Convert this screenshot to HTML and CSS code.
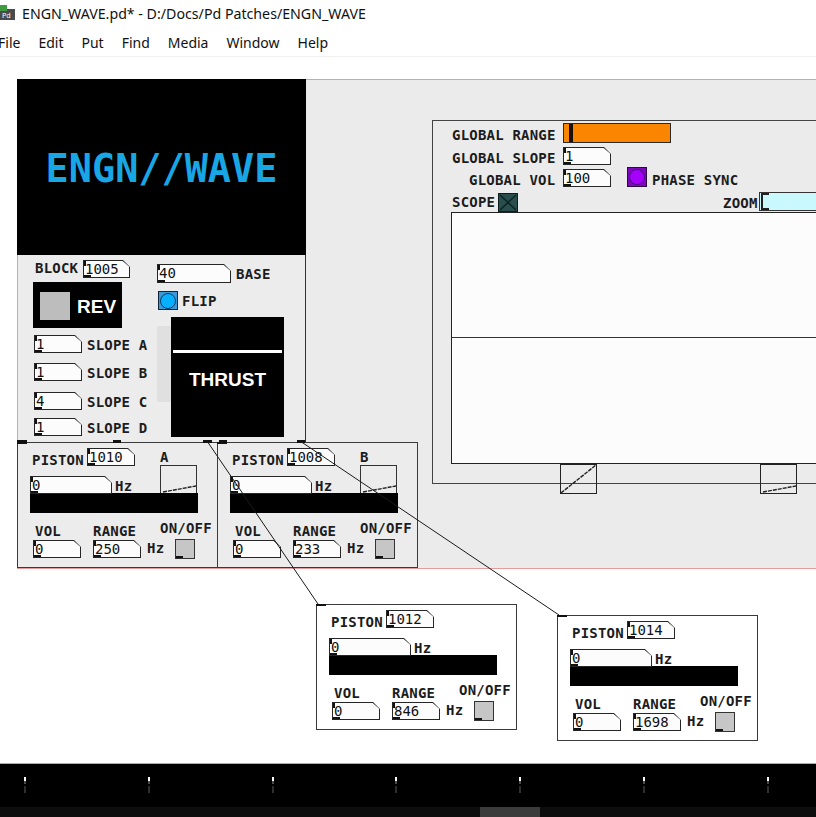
FILE: index.html
```html
<!DOCTYPE html>
<html lang="en">
<head>
<meta charset="utf-8">
<title>ENGN_WAVE.pd</title>
<link rel="stylesheet" href="styles.css">
</head>
<body>
<div class="window">
  <header class="titlebar">
    <svg class="appicon" viewBox="0 0 16 15" width="16" height="15"><rect x="0" y="4" width="15" height="11" fill="#4a4a4a"/><rect x="0" y="0" width="7" height="6" fill="#3f9b3f"/><text x="2" y="13" font-size="7" fill="#fff" font-family="DejaVu Sans">Pd</text></svg>
    <span class="title">ENGN_WAVE.pd* - D:/Docs/Pd Patches/ENGN_WAVE</span>
  </header>
  <nav class="menubar">
    <span>File</span><span>Edit</span><span>Put</span><span>Find</span><span>Media</span><span>Window</span><span>Help</span>
  </nav>
  <main class="canvas">
    <div class="gop"></div>
    <div class="header"><span class="logo">ENGN//WAVE</span></div>
    <div class="engine"></div>

    <span class="lbl l-block">BLOCK</span>
    <span class="nb n-block"><span>1005</span></span>
    <div class="rev"><span class="rev-sq"></span><span class="rev-txt">REV</span></div>
    <span class="nb n-base"><span>40</span></span>
    <span class="lbl l-base">BASE</span>
    <span class="tog tog-flip"><i></i></span>
    <span class="lbl l-flip">FLIP</span>
    <span class="strip"></span>
    <div class="thrust"><span class="thrust-line"></span><span class="thrust-txt">THRUST</span></div>
    <span class="nb n-sa"><span>1</span></span><span class="lbl l-sa">SLOPE A</span>
    <span class="nb n-sb"><span>1</span></span><span class="lbl l-sb">SLOPE B</span>
    <span class="nb n-sc"><span>4</span></span><span class="lbl l-sc">SLOPE C</span>
    <span class="nb n-sd"><span>1</span></span><span class="lbl l-sd">SLOPE D</span>

    <section class="piston piston-a">
      <span class="lbl p-name">PISTON</span>
      <span class="nb p-id"><span>1010</span></span>
      <span class="lbl p-letter">A</span>
      <span class="p-graph"><svg width="35" height="38" viewBox="0 0 35 38"><line x1="2" y1="26" x2="35" y2="20"/></svg></span>
      <span class="nb p-freq"><span>0</span></span>
      <span class="lbl p-hz1">Hz</span>
      <span class="p-bar"></span>
      <span class="lbl p-vol">VOL</span>
      <span class="lbl p-range">RANGE</span>
      <span class="lbl p-onoff">ON/OFF</span>
      <span class="nb p-volbox"><span>0</span></span>
      <span class="nb p-rangebox"><span>250</span></span>
      <span class="lbl p-hz2">Hz</span>
      <span class="tgl p-toggle"></span>
    </section>

    <section class="piston piston-b">
      <span class="lbl p-name">PISTON</span>
      <span class="nb p-id"><span>1008</span></span>
      <span class="lbl p-letter">B</span>
      <span class="p-graph"><svg width="35" height="38" viewBox="0 0 35 38"><line x1="2" y1="26" x2="35" y2="20"/></svg></span>
      <span class="nb p-freq"><span>0</span></span>
      <span class="lbl p-hz1">Hz</span>
      <span class="p-bar"></span>
      <span class="lbl p-vol">VOL</span>
      <span class="lbl p-range">RANGE</span>
      <span class="lbl p-onoff">ON/OFF</span>
      <span class="nb p-volbox"><span>0</span></span>
      <span class="nb p-rangebox"><span>233</span></span>
      <span class="lbl p-hz2">Hz</span>
      <span class="tgl p-toggle"></span>
    </section>

    <section class="piston piston-c white">
      <span class="lbl p-name">PISTON</span>
      <span class="nb p-id"><span>1012</span></span>
      <span class="nb p-freq"><span>0</span></span>
      <span class="lbl p-hz1">Hz</span>
      <span class="p-bar"></span>
      <span class="lbl p-vol">VOL</span>
      <span class="lbl p-range">RANGE</span>
      <span class="lbl p-onoff">ON/OFF</span>
      <span class="nb p-volbox"><span>0</span></span>
      <span class="nb p-rangebox"><span>846</span></span>
      <span class="lbl p-hz2">Hz</span>
      <span class="tgl p-toggle"></span>
    </section>

    <section class="piston piston-d white">
      <span class="lbl p-name">PISTON</span>
      <span class="nb p-id"><span>1014</span></span>
      <span class="nb p-freq"><span>0</span></span>
      <span class="lbl p-hz1">Hz</span>
      <span class="p-bar"></span>
      <span class="lbl p-vol">VOL</span>
      <span class="lbl p-range">RANGE</span>
      <span class="lbl p-onoff">ON/OFF</span>
      <span class="nb p-volbox"><span>0</span></span>
      <span class="nb p-rangebox"><span>1698</span></span>
      <span class="lbl p-hz2">Hz</span>
      <span class="tgl p-toggle"></span>
    </section>

    <div class="scopebox"></div>
    <span class="lbl l-grange">GLOBAL RANGE</span>
    <span class="slider-range"></span>
    <span class="lbl l-gslope">GLOBAL SLOPE</span>
    <span class="nb n-gslope"><span>1</span></span>
    <span class="lbl l-gvol">GLOBAL VOL</span>
    <span class="nb n-gvol"><span>100</span></span>
    <span class="tog tog-phase"><i></i></span>
    <span class="lbl l-phase">PHASE SYNC</span>
    <span class="lbl l-scope">SCOPE</span>
    <span class="tog-scope"><svg width="18" height="17" viewBox="0 0 18 17"><line x1="1" y1="1" x2="17" y2="16"/><line x1="17" y1="1" x2="1" y2="16"/></svg></span>
    <span class="lbl l-zoom">ZOOM</span>
    <span class="slider-zoom"></span>
    <div class="scope"><span class="scope-mid"></span></div>
    <span class="mini mini-1"><svg width="35" height="28" viewBox="0 0 35 28"><line x1="0" y1="28" x2="35" y2="0"/></svg></span>
    <span class="mini mini-2"><svg width="35" height="28" viewBox="0 0 35 28"><line x1="2" y1="27" x2="35" y2="21"/></svg></span>

    <span class="mark mk1"></span>
    <span class="mark mk2"></span>
    <span class="mark mk3"></span>
    <span class="mark mk4"></span>
    <span class="mark mk5"></span>

    <svg class="cords" width="816" height="706" viewBox="0 0 816 706">
      <line x1="207" y1="384" x2="318" y2="547"/>
      <line x1="300" y1="384" x2="559" y2="558"/>
    </svg>
  </main>
  <footer class="taskbar">
    <div class="tb-icons"><i></i><i></i><i></i><i></i><i></i><i></i><i></i></div>
    <div class="tb-strip"><span class="tb-active"></span></div>
  </footer>
</div>
</body>
</html>
```
FILE: styles.css
```css
* { box-sizing: border-box; margin: 0; padding: 0; }
html, body { width: 816px; height: 817px; overflow: hidden; background: #fff; }
body { font-family: "Noto Sans", "Open Sans", sans-serif; color: #000; }

.window { display: flex; flex-direction: column; height: 817px; }

.titlebar { height: 30px; flex: none; display: flex; align-items: flex-start; }
.appicon { flex: none; margin-top: 5px; }
.title { margin-left: 6px; font-size: 14.2px; line-height: 27px; color: #111; white-space: nowrap; }

.menubar { height: 27px; flex: none; display: flex; gap: 18px; margin-left: -2px; font-size: 14px; line-height: 26px; color: #111; border-bottom: 1px solid #f0f0f0; }

.canvas { position: relative; height: 706px; flex: none; overflow: hidden; background: #fff; }

/* labels and atoms */
.lbl { position: absolute; font: bold 14px/14px "DejaVu Sans Mono", monospace; color: #1c1c1c; white-space: nowrap; letter-spacing: .2px; z-index: 2; }
.nb { position: absolute; height: 18px; width: 48px; background: #262626; clip-path: polygon(0 0, calc(100% - 7px) 0, 100% 7px, 100% 100%, 0 100%); font: 14px/19px "DejaVu Sans Mono", monospace; color: #111; padding-left: 2px; white-space: nowrap; z-index: 2; }
.nb::before { content: ""; position: absolute; left: 1px; top: 1px; right: 1px; bottom: 1px; background: linear-gradient(#111, #111) 0 0 / 2px 5px no-repeat, linear-gradient(#111, #111) 0 100% / 7px 2px no-repeat, #fcfcfc; clip-path: polygon(0 0, calc(100% - 6.4px) 0, 100% 5.4px, 100% 100%, 0 100%); }
.nb > span { position: relative; }

.tgl { position: absolute; width: 20px; height: 20px; background: #c6c6c6; border: 1px solid #333; z-index: 2; }
.tgl::after { content: ""; position: absolute; left: 0; bottom: 0; width: 7px; height: 2px; background: #111; }

/* gop area */
.gop { position: absolute; left: 17px; top: 22px; width: 830px; height: 490px; background: #ebebeb; border: 1px solid #e79b9b; }
.header { position: absolute; left: 17px; top: 22px; width: 289px; height: 176px; background: #000; display: flex; align-items: center; justify-content: center; padding-top: 5px; }
.logo { font: bold 38.5px/1 "DejaVu Sans Mono", monospace; color: #19a6e4; }
.engine { position: absolute; left: 18px; top: 198px; width: 288px; height: 188px; background: #ececec; border-right: 1px solid #333; border-bottom: 1px solid #333; }

.l-block { left: 35px; top: 204px; }
.n-block { left: 83px; top: 203px; width: 47px; }
.rev { position: absolute; left: 33px; top: 225px; width: 89px; height: 46px; background: #000; }
.rev-sq { position: absolute; left: 7px; top: 10px; width: 30px; height: 28px; background: #bdbdbd; }
.rev-txt { position: absolute; left: 44px; top: 15px; font: bold 19px/19px "Liberation Sans", Arial, sans-serif; color: #fff; }
.n-base { left: 157px; top: 207px; width: 74px; height: 19px; }
.l-base { left: 236px; top: 210px; }
.tog { position: absolute; width: 20px; height: 19px; border: 1px solid #10253a; display: flex; align-items: center; justify-content: center; z-index: 2; }
.tog i { display: block; width: 16px; height: 16px; border-radius: 50%; border: 1px solid #0b3a66; }
.tog-flip { left: 158px; top: 234px; background: #3a9ad8; }
.tog-flip i { background: #07b0ff; }
.l-flip { left: 182px; top: 237px; }
.strip { position: absolute; left: 157px; top: 269px; width: 14px; height: 76px; background: #e0e0e0; }
.thrust { position: absolute; left: 171px; top: 260px; width: 113px; height: 120px; background: #000; }
.thrust-line { position: absolute; left: 2px; right: 2px; top: 33px; height: 3px; background: #fff; }
.thrust-txt { position: absolute; left: 0; right: 0; top: 53px; text-align: center; font: bold 19px/19px "Liberation Sans", Arial, sans-serif; color: #fff; }
.n-sa { left: 34px; top: 278px; }
.n-sb { left: 34px; top: 306px; }
.n-sc { left: 34px; top: 335px; }
.n-sd { left: 34px; top: 361px; }
.l-sa { left: 87px; top: 281px; }
.l-sb { left: 87px; top: 309px; }
.l-sc { left: 87px; top: 338px; }
.l-sd { left: 87px; top: 364px; }

/* piston subpatches */
.piston { position: absolute; width: 201px; height: 126px; border: 1px solid #3a3a3a; background: #ececec; }
.piston::before { content: ""; position: absolute; left: -1px; top: -1px; width: 10px; height: 2px; background: #111; }
.piston.white { background: #fff; }
.piston-a { left: 17px; top: 385px; }
.piston-b { left: 217px; top: 385px; }
.piston-c { left: 316px; top: 547px; }
.piston-d { left: 557px; top: 558px; }
.p-name { left: 14px; top: 10px; }
.p-id { left: 69px; top: 5px; }
.p-letter { left: 142px; top: 7px; }
.p-graph { position: absolute; left: 142px; top: 22px; width: 37px; height: 40px; border: 1px solid #333; }
.p-graph svg, .mini svg { display: block; }
.p-graph line, .mini line { stroke: #222; stroke-width: 1.4; stroke-dasharray: 4 1; }
.p-freq { left: 12px; top: 33px; width: 82px; }
.p-hz1 { left: 97px; top: 36px; }
.p-bar { position: absolute; left: 12px; top: 50px; width: 168px; height: 20px; background: #000; z-index: 1; }
.p-vol { left: 17px; top: 81px; }
.p-range { left: 75px; top: 81px; }
.p-onoff { left: 142px; top: 78px; }
.p-volbox { left: 15px; top: 97px; }
.p-rangebox { left: 75px; top: 97px; }
.p-hz2 { left: 129px; top: 98px; }
.p-toggle { left: 157px; top: 96px; }

/* scope section */
.scopebox { position: absolute; left: 432px; top: 63px; width: 400px; height: 364px; border: 1px solid #444; }
.l-grange { left: 452px; top: 71px; }
.slider-range { position: absolute; left: 563px; top: 66px; width: 108px; height: 20px; background: #f98500; border: 1px solid #2a2a2a; }
.slider-range::before { content: ""; position: absolute; left: 5px; top: 0; bottom: 0; width: 4px; background: #1a1008; }
.l-gslope { left: 452px; top: 94px; }
.n-gslope { left: 563px; top: 90px; }
.l-gvol { left: 469px; top: 116px; }
.n-gvol { left: 563px; top: 112px; }
.tog-phase { left: 627px; top: 110px; height: 20px; background: #7d08bd; border-color: #2d0a45; }
.tog-phase i { background: #a500fa; border-color: #4a0a80; }
.l-phase { left: 652px; top: 116px; }
.l-scope { left: 452px; top: 138px; }
.tog-scope { position: absolute; left: 498px; top: 136px; width: 20px; height: 19px; background: #2a4e4e; border: 1px solid #0e1e1e; }
.tog-scope svg { display: block; }
.tog-scope line { stroke: #0d2424; stroke-width: 1.6; }
.l-zoom { left: 723px; top: 139px; }
.slider-zoom { position: absolute; left: 759px; top: 135px; width: 80px; height: 19px; background: #c9f9fc; border: 1px solid #333; }
.slider-zoom::before { content: ""; position: absolute; left: 1px; top: 0; bottom: 0; width: 6px; border-left: 2px solid #222; background: linear-gradient(#222, #222) 0 0 / 6px 2px no-repeat, linear-gradient(#222, #222) 0 100% / 6px 2px no-repeat; }
.scope { position: absolute; left: 451px; top: 155px; width: 400px; height: 252px; background: #fcfcfc; border: 1px solid #222; }
.scope-mid { position: absolute; left: 0; right: 0; top: 124px; height: 1px; background: #333; }
.mini { position: absolute; top: 407px; width: 37px; height: 30px; border: 1px solid #222; }
.mini-1 { left: 560px; }
.mini-2 { left: 760px; }

/* inlets / outlets */
.mark { position: absolute; top: 383px; height: 3px; background: #111; z-index: 3; }
.mk1 { left: 17px; width: 10px; }
.mk2 { left: 113px; width: 8px; }
.mk3 { left: 203px; width: 9px; }
.mk4 { left: 219px; width: 8px; }
.mk5 { left: 297px; width: 8px; }

.cords { position: absolute; left: 0; top: 0; z-index: 4; pointer-events: none; }
.cords line { stroke: #1a1a1a; stroke-width: 1; }

/* taskbar */
.taskbar { height: 54px; flex: none; background: #000; border-top: 1px solid #c8a878; display: flex; flex-direction: column; }
.tb-icons { height: 43px; display: flex; justify-content: space-between; padding: 13px 47px 0 24px; }
.tb-icons i { display: block; width: 2px; height: 16px; background: linear-gradient(#fff 0 4px, #4a4a4a 4px 7px, transparent 7px 9px, #2e2e2e 9px 16px); }
.tb-strip { height: 10px; background: #0d0d0d; position: relative; }
.tb-active { position: absolute; left: 480px; width: 60px; top: 0; bottom: 0; background: #3b3b3b; }
```
